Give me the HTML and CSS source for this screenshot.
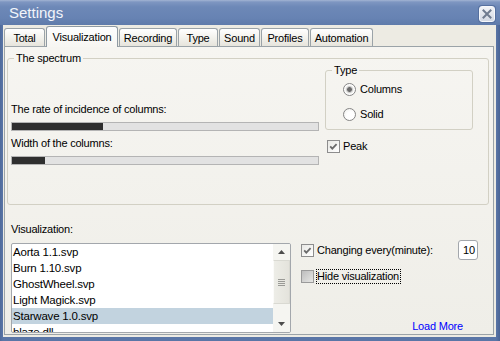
FILE: index.html
```html
<!DOCTYPE html>
<html>
<head>
<meta charset="utf-8">
<title>Settings</title>
<link rel="stylesheet" href="styles.css">
</head>
<body>
<div class="window">
  <div class="titlebar">
    <span class="title">Settings</span>
    <button class="close" type="button" aria-label="Close">
      <svg width="10" height="10" viewBox="0 0 10 10"><path d="M1.5 1.5 L8.5 8.5 M8.5 1.5 L1.5 8.5" stroke="#6f7b8f" stroke-width="2" fill="none" stroke-linecap="square"/></svg>
    </button>
  </div>
  <div class="client">
    <div class="tabs">
      <div class="tab tab-total">Total</div>
      <div class="tab tab-vis active">Visualization</div>
      <div class="tab tab-rec">Recording</div>
      <div class="tab tab-type">Type</div>
      <div class="tab tab-sound">Sound</div>
      <div class="tab tab-prof">Profiles</div>
      <div class="tab tab-auto">Automation</div>
    </div>
    <div class="panel">
      <fieldset class="group spectrum">
        <legend>The spectrum</legend>
        <div class="spectrum-body">
          <div class="sliders">
            <div class="label">The rate of incidence of columns:</div>
            <div class="bar"><div class="fill" style="width:29.6%"></div></div>
            <div class="label second">Width of the columns:</div>
            <div class="bar"><div class="fill" style="width:10.8%"></div></div>
          </div>
          <div class="side">
            <fieldset class="group type">
              <legend>Type</legend>
              <div class="radio-row first"><span class="radio checked"></span>Columns</div>
              <div class="radio-row"><span class="radio"></span>Solid</div>
            </fieldset>
            <div class="check-row peak">
              <span class="checkbox"><svg width="11" height="11" viewBox="0 0 11 11"><path d="M2.2 5.4 L4.3 7.6 L8.6 3.2" stroke="#6a6a6a" stroke-width="1.8" fill="none"/></svg></span>Peak
            </div>
          </div>
        </div>
      </fieldset>
      <div class="vis-label">Visualization:</div>
      <div class="bottom">
        <div class="listbox">
          <ul class="items">
            <li>Aorta 1.1.svp</li>
            <li>Burn 1.10.svp</li>
            <li>GhostWheel.svp</li>
            <li>Light Magick.svp</li>
            <li class="selected">Starwave 1.0.svp</li>
            <li>blaze.dll</li>
          </ul>
          <div class="scrollbar">
            <div class="sb-btn"><svg width="7" height="4" viewBox="0 0 7 4"><path d="M0 4 L3.5 0 L7 4 Z" fill="#4d4d4d"/></svg></div>
            <div class="sb-track">
              <div class="sb-thumb"><span class="grip"></span></div>
            </div>
            <div class="sb-btn down"><svg width="7" height="4" viewBox="0 0 7 4"><path d="M0 0 L3.5 4 L7 0 Z" fill="#4d4d4d"/></svg></div>
          </div>
        </div>
        <div class="options">
          <div class="opt-row">
            <div class="check-row">
              <span class="checkbox"><svg width="11" height="11" viewBox="0 0 11 11"><path d="M2.2 5.4 L4.3 7.6 L8.6 3.2" stroke="#6a6a6a" stroke-width="1.8" fill="none"/></svg></span>Changing every(minute):
            </div>
            <div class="edit">10</div>
          </div>
          <div class="check-row hide-row">
            <span class="checkbox pressed"></span><span class="focus">Hide visualization</span>
          </div>
          <a class="load-more">Load More</a>
        </div>
      </div>
    </div>
  </div>
</div>
</body>
</html>
```
FILE: styles.css
```css
html, body {
  margin: 0;
  padding: 0;
}
body {
  font-family: "Liberation Sans", Arial, sans-serif;
  font-size: 11px;
  letter-spacing: -0.2px;
  color: #000;
  background: #fff;
}
.window {
  width: 500px;
  height: 341px;
  box-sizing: border-box;
  display: flex;
  flex-direction: column;
  background: linear-gradient(to right, #4f6a9b, #5a76a7 3px, #5a76a7 496px, #4a6495);
  overflow: hidden;
}
.titlebar {
  height: 25px;
  flex: none;
  display: flex;
  align-items: center;
  justify-content: space-between;
  padding: 0 5px 0 9px;
  background: linear-gradient(to bottom, #a3b4d3 0px, #7e96c1 2px, #6d88b7 7px, #6783b3 18px, #5f7bab 25px);
}
.title {
  font-size: 15px;
  letter-spacing: 0;
  color: #f2f5fa;
  line-height: 16px;
  margin-top: 1px;
}
.close {
  width: 16px;
  height: 16px;
  margin: 2px 0 0 0;
  padding: 0;
  box-sizing: border-box;
  border: 1px solid #f5f7fb;
  border-radius: 3px;
  background: linear-gradient(#f1f3f7, #d3d9e4);
  box-shadow: 0 0 0 1px #56709f;
  display: flex;
  align-items: center;
  justify-content: center;
}
.client {
  flex: 1;
  margin: 0 4px 4px 3px;
  padding: 0 2px 2px 1px;
  background: #edebe3;
  display: flex;
  flex-direction: column;
  min-height: 0;
}
.tabs {
  height: 22px;
  box-sizing: border-box;
  padding-top: 1px;
  display: flex;
  align-items: flex-end;
  gap: 1px;
  position: relative;
  z-index: 1;
  flex: none;
}
.tab {
  height: 18px;
  margin-bottom: 1px;
  box-sizing: border-box;
  border: 1px solid #9ba3a8;
  border-bottom: none;
  border-radius: 3px 3px 0 0;
  background: linear-gradient(#ffffff, #f3f2ed 50%, #e6e4dc);
  display: flex;
  align-items: center;
  justify-content: center;
  padding-top: 1px;
  white-space: nowrap;
}
.tab.active {
  height: 21px;
  margin-bottom: 0;
  padding-top: 0;
  padding-bottom: 1px;
  background: linear-gradient(#fdfdfe, #f7f6f2);
  border-color: #8f9aa3;
}
.tab-total { width: 41px; }
.tab-vis { width: 72px; }
.tab-rec { width: 58px; }
.tab-type { width: 40px; }
.tab-sound { width: 41px; }
.tab-prof { width: 48px; }
.tab-auto { width: 63px; }

.panel {
  flex: 1;
  margin-top: -1px;
  border: 1px solid #9ba3a8;
  background: linear-gradient(#f6f5f1, #efeee8);
  padding: 5px 4px 2px 2px;
  display: flex;
  flex-direction: column;
  min-height: 0;
}
.group {
  margin: 0;
  min-width: 0;
  border: 1px solid #d2d0c4;
  border-radius: 3px;
  padding: 0;
}
.group legend {
  padding: 0 2px;
  line-height: 13px;
}
.spectrum {
  padding: 0 15px 39px 3px;
}
.spectrum legend {
  margin-left: 3px;
}
.spectrum-body {
  display: grid;
  grid-template-columns: 308px 148px;
  column-gap: 6px;
  align-items: start;
}
.sliders {
  padding-top: 38px;
  display: flex;
  flex-direction: column;
}
.label {
  line-height: 13px;
  white-space: nowrap;
}
.label.second {
  margin-top: 6px;
}
.bar {
  height: 9px;
  margin-top: 6px;
  box-sizing: border-box;
  border: 1px solid #b4b4b4;
  background: #e2e2e2;
}
.fill {
  height: 100%;
  background: #2f2f2f;
}
.side {
  display: flex;
  flex-direction: column;
}
.type {
  margin-top: -1px;
  padding: 0 0 7px 0;
}
.type legend {
  margin-left: 6px;
}
.radio-row {
  height: 16px;
  display: flex;
  align-items: center;
  gap: 4px;
  margin: 9px 0 0 17px;
}
.radio-row.first {
  margin-top: 4px;
}
.radio {
  width: 13px;
  height: 13px;
  box-sizing: border-box;
  border: 1px solid #858585;
  border-radius: 50%;
  background: radial-gradient(circle at 60% 60%, #ffffff 40%, #ecece8 100%);
  flex: none;
}
.radio.checked {
  background: radial-gradient(circle, #6a6a6a 0, #6a6a6a 2px, #bdbdbd 2.6px, #f3f3f1 4px, #ffffff 5px);
}
.check-row {
  display: flex;
  align-items: center;
  gap: 3px;
  line-height: 13px;
  white-space: nowrap;
}
.peak {
  margin: 10px 0 0 2px;
}
.checkbox {
  width: 13px;
  height: 13px;
  box-sizing: border-box;
  border: 1px solid #8d8d8d;
  background: linear-gradient(135deg, #e8e8e4, #ffffff);
  display: flex;
  align-items: center;
  justify-content: center;
  flex: none;
}
.checkbox.pressed {
  border-color: #9a9a9a;
  background: linear-gradient(135deg, #bdbdbd, #e6e6e4);
}
.vis-label {
  margin: 18px 0 0 4px;
  line-height: 13px;
}
.bottom {
  margin-top: 4px;
  display: flex;
  align-items: flex-start;
}
.listbox {
  margin: 3px 0 0 4px;
  width: 280px;
  height: 90px;
  box-sizing: border-box;
  border: 1px solid #a3a7ac;
  border-radius: 2px;
  background: #fff;
  display: flex;
  overflow: hidden;
}
.items {
  list-style: none;
  margin: 0;
  padding: 0;
  flex: 1;
  overflow: hidden;
}
.items li {
  height: 16px;
  line-height: 16px;
  padding-left: 1px;
  white-space: nowrap;
  font-size: 11.5px;
}
.items li.selected {
  background: #c2d3df;
}
.scrollbar {
  width: 17px;
  flex: none;
  display: flex;
  flex-direction: column;
  background: #f5f5f1;
}
.sb-btn {
  height: 16px;
  display: flex;
  align-items: center;
  justify-content: center;
  flex: none;
}
.sb-btn.down {
  align-items: flex-start;
  padding-top: 6px;
  box-sizing: border-box;
}
.sb-track {
  flex: 1;
  display: flex;
  flex-direction: column;
}
.sb-thumb {
  height: 44px;
  box-sizing: border-box;
  border: 1px solid #d9d9d2;
  border-left-color: #fbfbf9;
  border-radius: 1px;
  background: linear-gradient(to right, #ededE7, #e4e3dc);
  display: flex;
  align-items: center;
  justify-content: center;
}
.grip {
  width: 7px;
  height: 7px;
  background: repeating-linear-gradient(#9a9a96 0, #9a9a96 1px, transparent 1px, transparent 2px);
}
.options {
  margin-left: 10px;
  width: 177px;
  height: 93px;
  display: flex;
  flex-direction: column;
}
.opt-row {
  height: 20px;
  display: flex;
  align-items: center;
  justify-content: space-between;
}
.edit {
  width: 20px;
  height: 20px;
  box-sizing: border-box;
  border: 1px solid #a3a7ac;
  border-radius: 3px;
  background: #fff;
  padding-left: 4px;
  line-height: 18px;
}
.hide-row {
  margin-top: 9px;
  gap: 2px;
}
.focus {
  border: 1px dotted #000;
  line-height: 13px;
  padding-right: 1px;
}
.load-more {
  margin-top: auto;
  align-self: flex-end;
  margin-right: 15px;
  color: #0000ff;
  line-height: 13px;
}
```
